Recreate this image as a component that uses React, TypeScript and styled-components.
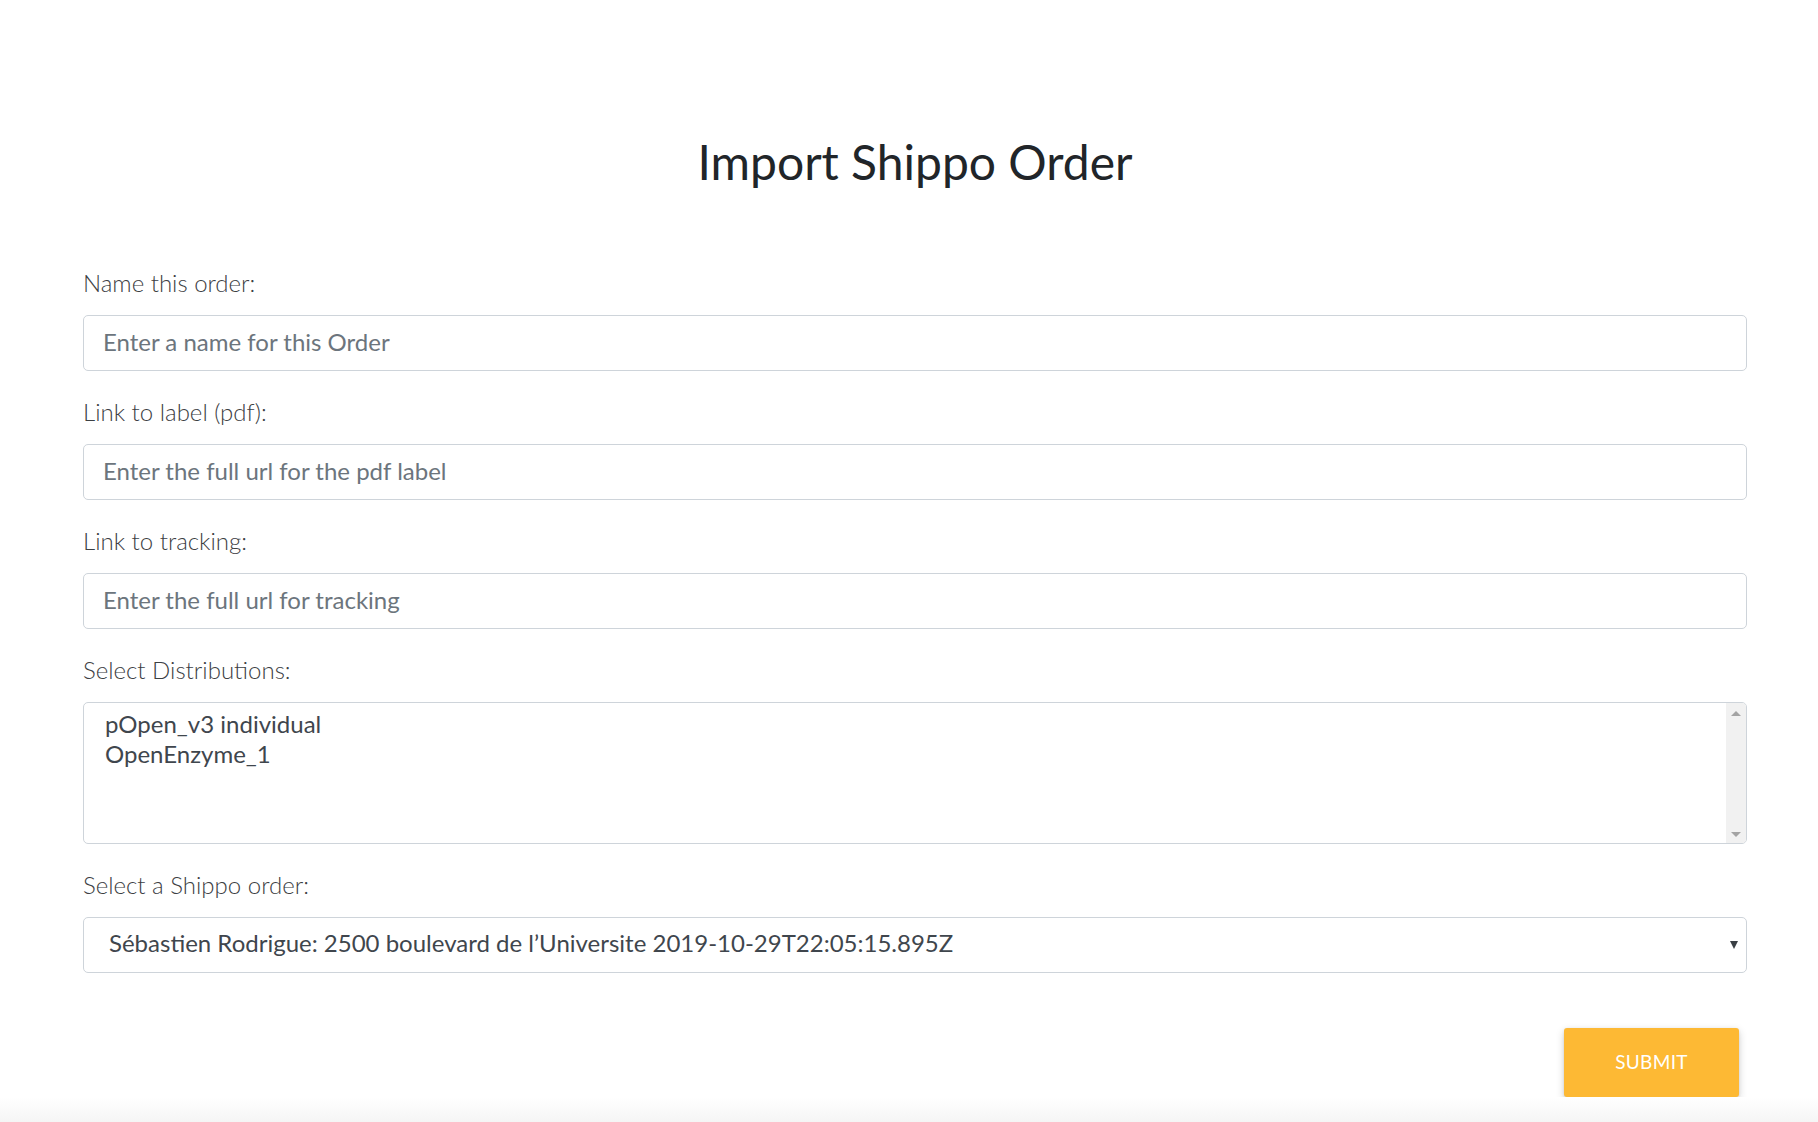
import React from "react";
import styled, { createGlobalStyle } from "styled-components";

const Global = createGlobalStyle`
  html, body { margin: 0; padding: 0; background: #ffffff; }
  body { font-family: Lato, "Open Sans", sans-serif; -webkit-font-smoothing: antialiased; }
  * { box-sizing: border-box; }
`;

const Page = styled.div`
  min-height: 1122px;
  display: flex;
  flex-direction: column;
`;

const Main = styled.main`
  flex: 1;
  padding: 133px 71px 0 83px;
`;

const Title = styled.h1`
  margin: 0;
  text-align: center;
  font-family: Lato, sans-serif;
  font-weight: 400;
  font-size: 48px;
  line-height: 1.2;
  color: #212529;
`;

const Form = styled.form`
  display: flex;
  flex-direction: column;
  padding-top: 77px;
`;

const Field = styled.div`
  display: flex;
  flex-direction: column;
  margin-bottom: 26px;
`;

const Label = styled.label`
  font-family: Lato, sans-serif;
  font-weight: 300;
  font-size: 24px;
  line-height: 30px;
  color: #3c4043;
  margin-bottom: 17px;
`;

const TextInput = styled.input`
  height: 56px;
  width: 100%;
  padding: 0 18px 2px 19px;
  border: 1.5px solid #ced4da;
  border-radius: 5px;
  background: #fff;
  font-family: Lato, sans-serif;
  font-size: 24px;
  color: #495057;
  outline: none;
  &::placeholder { color: #6c757d; opacity: 1; }
`;

const ListBox = styled.div`
  height: 142px;
  display: flex;
  border: 1.5px solid #ced4da;
  border-radius: 5px;
  overflow: hidden;
  background: #fff;
`;

const Options = styled.div`
  flex: 1;
  padding: 6px 21px;
  display: flex;
  flex-direction: column;
`;

const Option = styled.div`
  font-family: Lato, sans-serif;
  font-size: 24px;
  line-height: 30px;
  color: #3f464d;
`;

const ScrollTrack = styled.div`
  width: 20px;
  background: #f1f1f1;
  display: flex;
  flex-direction: column;
  justify-content: space-between;
  align-items: center;
  padding: 8px 0 6px;
`;

const Arrow = styled.span<{ $dir: "up" | "down" }>`
  width: 0;
  height: 0;
  border-left: 5px solid transparent;
  border-right: 5px solid transparent;
  ${(p) =>
    p.$dir === "up"
      ? "border-bottom: 5px solid #a3a3a3;"
      : "border-top: 5px solid #a3a3a3;"}
`;

const SelectBox = styled.div`
  height: 56px;
  display: flex;
  align-items: center;
  justify-content: space-between;
  padding: 0 8px 4px 25px;
  border: 1.5px solid #ced4da;
  border-radius: 5px;
  background: #fff;
  font-family: Lato, sans-serif;
  font-size: 24px;
  color: #3f464d;
`;

const Caret = styled.span`
  width: 0;
  height: 0;
  margin-top: 4px;
  border-left: 4px solid transparent;
  border-right: 4px solid transparent;
  border-top: 8px solid #3a3f44;
`;

const Actions = styled.div`
  display: flex;
  justify-content: flex-end;
  padding-right: 8px;
  margin-top: 29px;
`;

const SubmitButton = styled.button`
  width: 175px;
  height: 69px;
  border: none;
  border-radius: 3px;
  background: #fdb934;
  color: #ffffff;
  font-family: Lato, sans-serif;
  font-size: 19px;
  letter-spacing: 0.3px;
  text-transform: uppercase;
  padding-bottom: 2px;
  box-shadow: 0 3px 8px rgba(0, 0, 0, 0.18), 0 1px 3px rgba(0, 0, 0, 0.1);
  cursor: pointer;
`;

const BottomShade = styled.div`
  height: 25px;
  background: linear-gradient(to bottom, #ffffff, #f5f5f5);
`;

export default function App() {
  return (
    <Page>
      <Global />
      <Main>
        <Title>Import Shippo Order</Title>
        <Form onSubmit={(e) => e.preventDefault()}>
          <Field>
            <Label>Name this order:</Label>
            <TextInput placeholder="Enter a name for this Order" />
          </Field>
          <Field>
            <Label>Link to label (pdf):</Label>
            <TextInput placeholder="Enter the full url for the pdf label" />
          </Field>
          <Field>
            <Label>Link to tracking:</Label>
            <TextInput placeholder="Enter the full url for tracking" />
          </Field>
          <Field>
            <Label>Select Distributions:</Label>
            <ListBox>
              <Options>
                <Option>pOpen_v3 individual</Option>
                <Option>OpenEnzyme_1</Option>
              </Options>
              <ScrollTrack>
                <Arrow $dir="up" />
                <Arrow $dir="down" />
              </ScrollTrack>
            </ListBox>
          </Field>
          <Field>
            <Label>Select a Shippo order:</Label>
            <SelectBox>
              <span>Sébastien Rodrigue: 2500 boulevard de l’Universite 2019-10-29T22:05:15.895Z</span>
              <Caret />
            </SelectBox>
          </Field>
          <Actions>
            <SubmitButton type="submit">Submit</SubmitButton>
          </Actions>
        </Form>
      </Main>
      <BottomShade />
    </Page>
  );
}
